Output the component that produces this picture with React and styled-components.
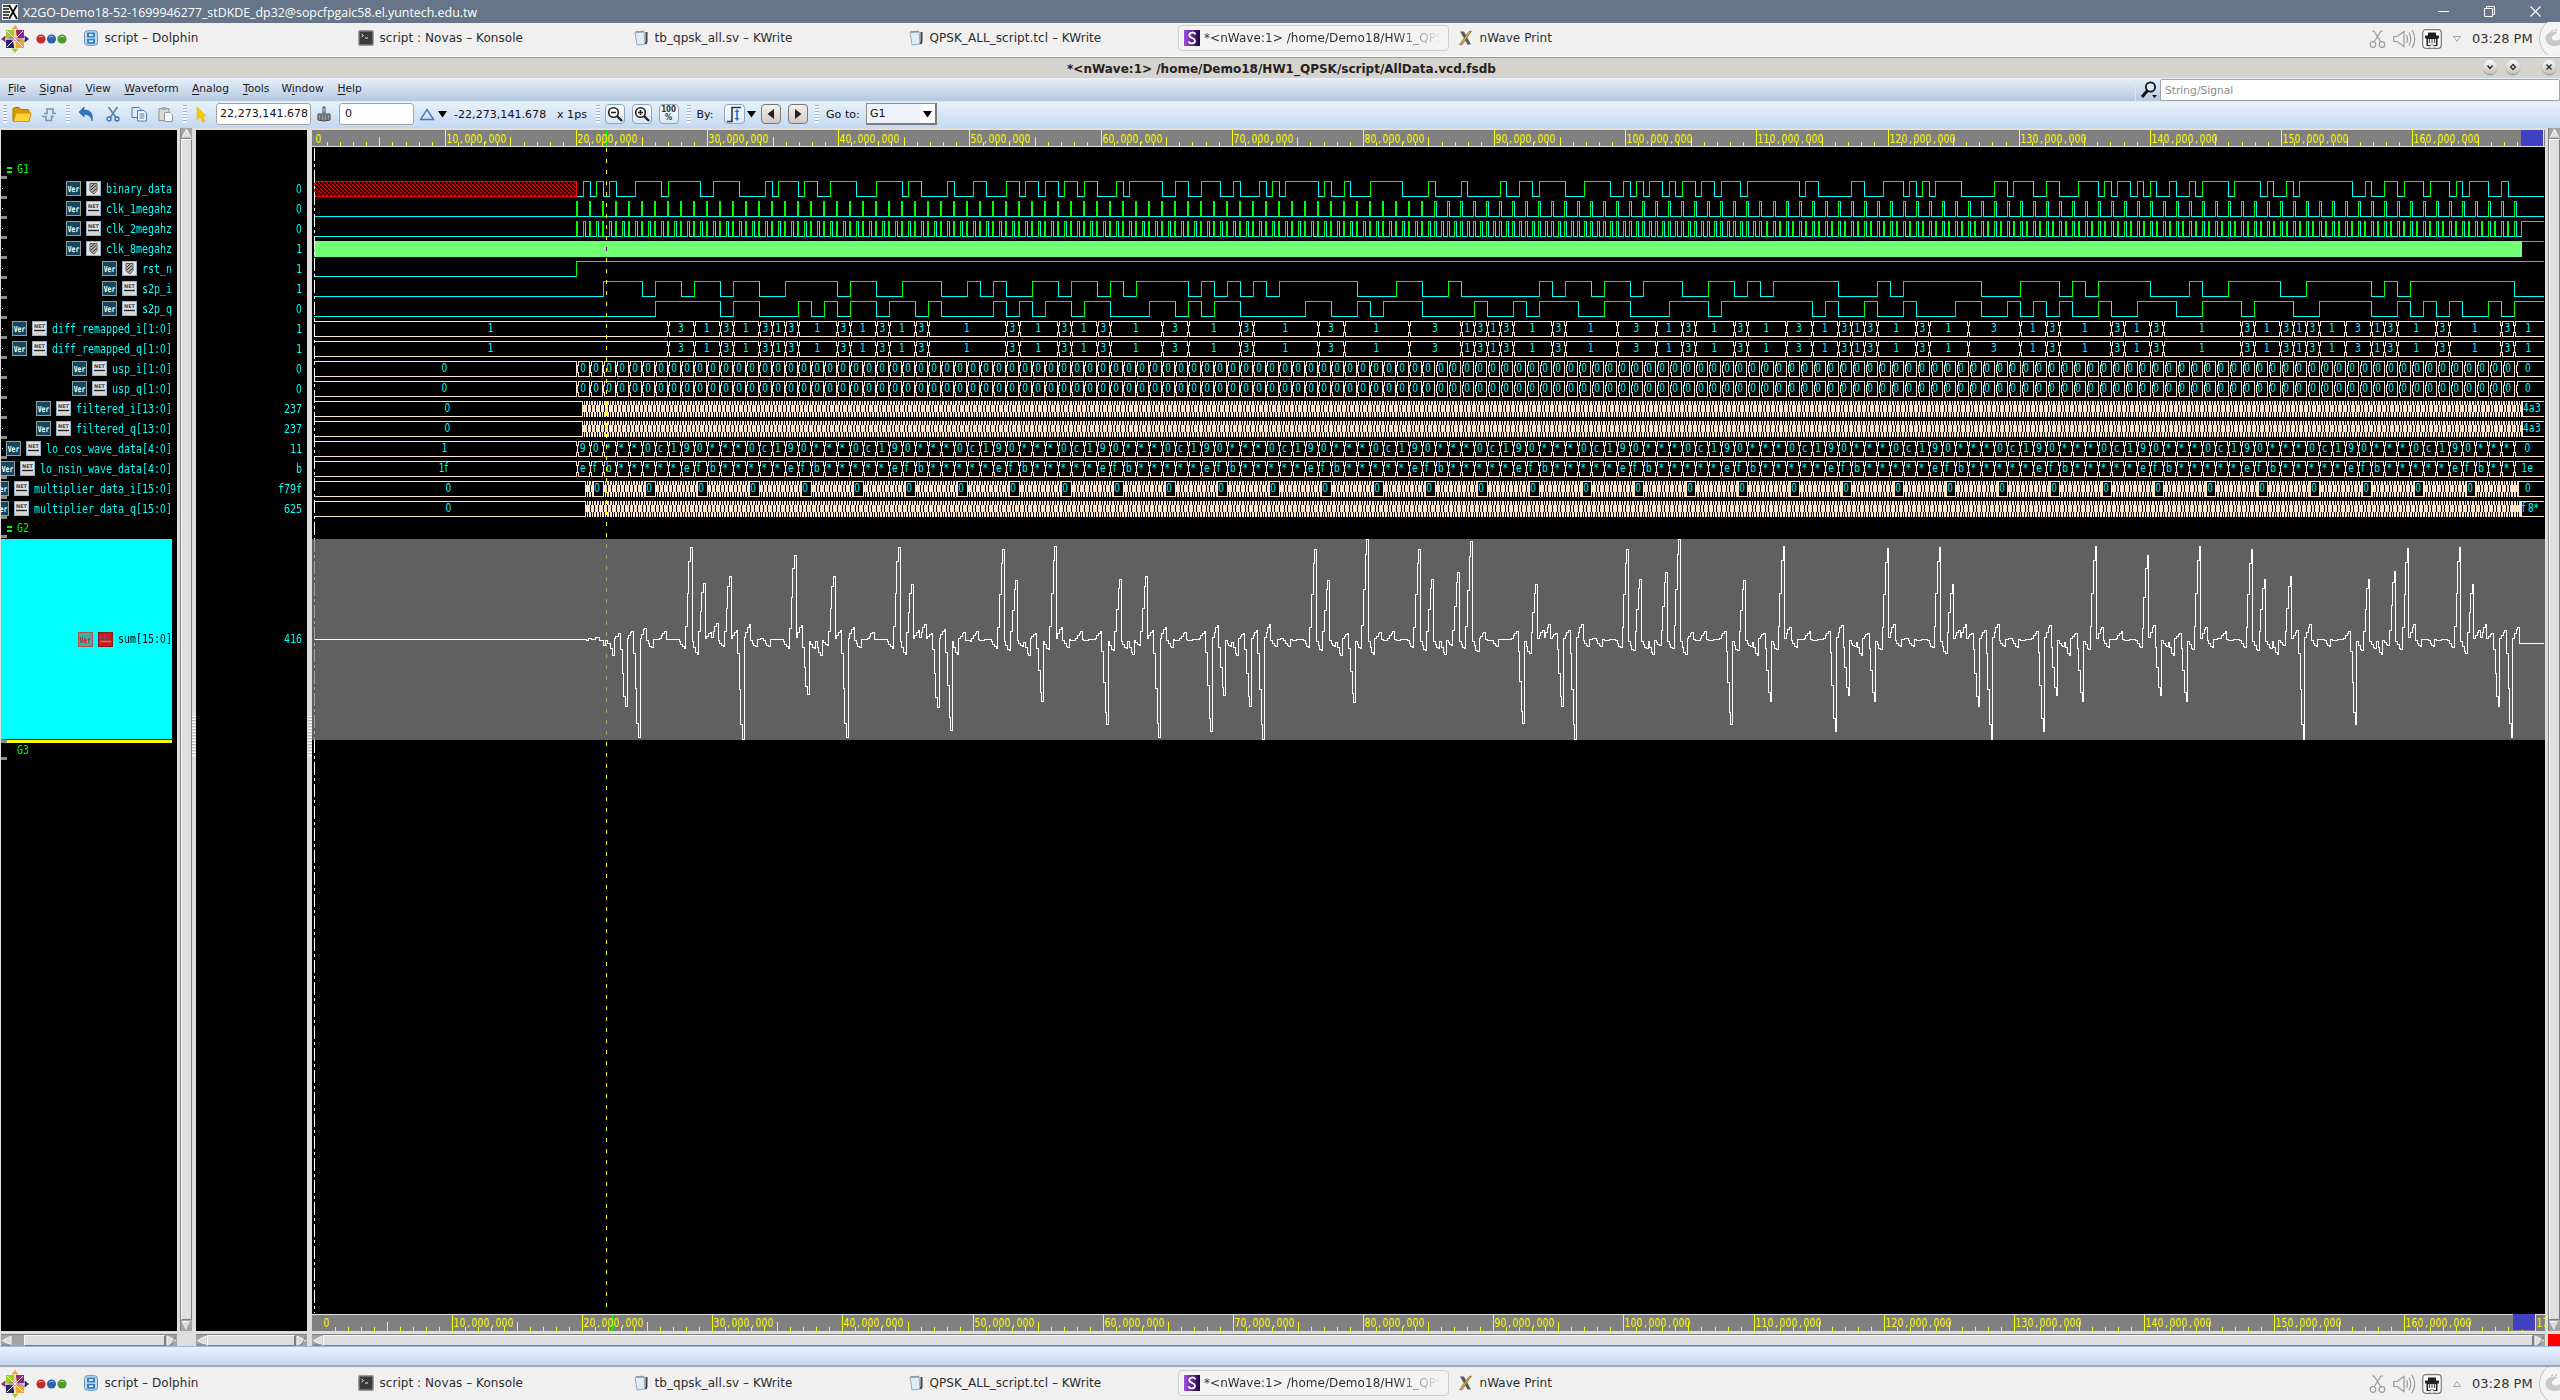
import React from "react";
import styled, { createGlobalStyle, css } from "styled-components";

const Global = createGlobalStyle`
  html, body { margin: 0; background: #000; }
  * { box-sizing: border-box; }
`;

const UI = `"DejaVu Sans", sans-serif`;
const MONO = `"DejaVu Sans Mono", monospace`;
const DIGIT = `"DejaVu Sans Condensed", "DejaVu Sans", sans-serif`;

const Page = styled.div`
  width: 2560px;
  height: 1400px;
  display: flex;
  flex-direction: column;
  overflow: hidden;
  background: #dedede;
  font-family: ${UI};
  color: #1c1c1c;
  white-space: nowrap;
`;

/* ---------- remote session title bar ---------- */
const SessionBar = styled.div`
  height: 23px;
  flex: none;
  background: #667688;
  color: #fff;
  display: flex;
  align-items: center;
  padding: 0 19px 0 2px;
  font: 12.4px "Open Sans", "Noto Sans", sans-serif;
`;
const SessionName = styled.span`
  margin-left: 5px;
  flex: 1;
  padding-top: 2px;
`;
const SessionButtons = styled.div`
  display: flex;
  gap: 35px;
  align-items: center;
`;

/* ---------- task bars ---------- */
const TaskBar = styled.div`
  height: ${(p) => (p.$bottom ? 33 : 35)}px;
  flex: none;
  background: #f0f0f0;
  display: flex;
  align-items: center;
  padding-bottom: ${(p) => (p.$bottom ? 0 : 3)}px;
  ${(p) => !p.$bottom && css`border-bottom: 1px solid #8f9c9c; box-shadow: inset 0 -1px 0 #fff;`}
`;
const Launchers = styled.div`
  width: 78px;
  display: flex;
  align-items: center;
  gap: 6px;
  flex: none;
`;
const Task = styled.div`
  width: 275px;
  height: 26px;
  flex: none;
  display: flex;
  align-items: center;
  padding-left: 5px;
  font-size: 12px;
  letter-spacing: 0.05px;
  color: #2c2c2c;
  margin-top: -1px;
`;
const TaskInner = styled.div`
  display: flex;
  align-items: center;
  gap: ${(p) => (p.$active ? 4 : 5.5)}px;
  overflow: hidden;
  ${(p) =>
    p.$active &&
    css`
      width: 271px;
      height: 26px;
      margin-left: -5px;
      padding-left: 5px;
      border: 1px solid #cfcfcf;
      border-radius: 4px;
      background: #f3f3f3;
      flex: none;
    `}
`;
const TaskText = styled.span`
  display: block;
  width: ${(p) => (p.$fade ? "242px" : "auto")};
  overflow: hidden;
  ${(p) => p.$fade && css`
    color: transparent;
    background: linear-gradient(90deg, #2c2c2c 78%, #f3f3f3 98%);
    background-clip: text;
    -webkit-background-clip: text;
  `}
`;
const Tray = styled.div`
  margin-left: auto;
  display: flex;
  align-items: center;
  height: 33px;
  flex: none;
`;
const Clock = styled.span`
  font-size: 13px;
  margin-left: 10px;
  width: 66px;
  color: #333;
`;

/* ---------- window chrome ---------- */
const WindowTitle = styled.div`
  height: 20px;
  flex: none;
  background: #d6d2ce;
  display: flex;
  align-items: center;
  font-weight: bold;
  font-size: 12px;
  color: #222;
`;
const TitleText = styled.span`
  flex: 1;
  text-align: center;
  padding-left: 80px;
  padding-top: 1px;
`;
const TitleButtons = styled.div`
  display: flex;
  align-items: center;
  padding-right: 4px;
  padding-bottom: 2px;
`;
const RoundButton = styled.span`
  width: 14px;
  height: 14px;
  border-radius: 50%;
  margin-left: ${(p) => p.$gap}px;
  background: linear-gradient(#fafafa, #c4c0bc);
  box-shadow: 0 1px 1px #8d8a86;
  display: flex;
  align-items: center;
  justify-content: center;
`;
const MenuBar = styled.div`
  height: 24px;
  flex: none;
  background: linear-gradient(#e8f1fc, #b5c8df);
  border-bottom: 1px solid #dfe9f5;
  display: flex;
  align-items: center;
  padding-left: 8px;
  font-size: 10.7px;
`;
const MenuItem = styled.span`
  width: ${(p) => p.$w}px;
  padding-bottom: 2px;
  u { text-underline-offset: 2px; }
`;
const Search = styled.div`
  margin-left: auto;
  display: flex;
  align-items: center;
  height: 22px;
  border-left: 1px solid #d7e3f2;
  padding-left: 4px;
`;
const SearchField = styled.div`
  margin-left: 2px;
  width: 400px;
  height: 22px;
  border: 1px solid #a0a4aa;
  border-radius: 2px;
  background: #fff;
  color: #8a8a8a;
  font-size: 10.7px;
  line-height: 22px;
  padding-left: 4px;
`;

const ToolBar = styled.div`
  height: 26px;
  flex: none;
  background: linear-gradient(#e7f2f8, #c4d8f2);
  display: flex;
  align-items: center;
  font-size: 11px;
  letter-spacing: 0.05px;
  color: #111;
  padding-bottom: 2px;
`;
const Slot = styled.span`
  flex: none;
  width: ${(p) => p.$w}px;
  margin-left: ${(p) => p.$gap || 0}px;
  display: flex;
  align-items: center;
  justify-content: center;
`;
const Label = styled(Slot)`
  justify-content: flex-start;
`;
const Grip = styled.span`
  flex: none;
  width: 4px;
  height: 18px;
  margin-left: ${(p) => p.$gap}px;
  background: repeating-linear-gradient(#9fb0c4 0 1px, #f4f8fc 1px 3px);
`;
const Field = styled.span`
  flex: none;
  width: ${(p) => p.$w}px;
  height: 22px;
  margin-left: ${(p) => p.$gap}px;
  border: 1px solid #a3a3a3;
  border-radius: 3px;
  background: #fff;
  line-height: 20px;
  padding-left: ${(p) => p.$pad}px;
`;
const PushButton = styled.span`
  flex: none;
  width: ${(p) => p.$w || 20}px;
  height: 20px;
  margin-left: ${(p) => p.$gap}px;
  border: 1px solid ${(p) => (p.$grey ? "#777" : "#8ba3bd")};
  border-radius: 4px;
  background: ${(p) => (p.$grey ? "linear-gradient(#f4f1ee,#cfcac5)" : "linear-gradient(#fbfdff,#dbe7f4)")};
  display: flex;
  align-items: center;
  justify-content: center;
`;
const Select = styled.span`
  flex: none;
  width: 71px;
  height: 22px;
  margin-left: 7px;
  border: 1px solid #8d8d8d;
  border-right: 2px solid #7a7a7a;
  border-bottom: 2px solid #7a7a7a;
  background: #edf2fb;
  display: flex;
  align-items: center;
  justify-content: space-between;
  padding-left: 3px;
`;
const SelectArrow = styled.span`
  width: 15px;
  height: 19px;
  background: #fff;
  display: flex;
  align-items: center;
  justify-content: center;
`;

/* ---------- workspace ---------- */
const Workspace = styled.div`
  height: 1218px;
  flex: none;
  display: flex;
  background: #dedede;
`;
const Column = styled.div`
  flex: none;
  width: ${(p) => p.$w}px;
  padding-top: 2px;
  padding-left: ${(p) => p.$pad || 0}px;
  display: flex;
  flex-direction: column;
`;
const Panel = styled.div`
  height: 1201px;
  flex: none;
  background: #000;
  padding-top: 27px;
  overflow: hidden;
`;
const Gutter = styled.div`
  flex: none;
  width: ${(p) => p.$w}px;
  padding-left: ${(p) => p.$pad || 0}px;
  display: flex;
  align-items: flex-start;
`;
const SplitGrip = styled.div`
  width: 4px;
  height: 40px;
  margin: 588px 0 0 ${(p) => p.$gap}px;
  background: repeating-linear-gradient(#fff 0 1px, #b9b9b9 1px 2px, #e4e4e4 2px 3px);
`;
const VScroll = styled.div`
  width: 12px;
  height: 1203px;
  background: #a4a4a4;
  border-left: 1px solid #808080;
  display: flex;
  flex-direction: column;
`;
const VThumb = styled.div`
  flex: 1;
  background: #dfdfdf;
  border: 1px solid #f8f8f8;
  border-right: 1px solid #7c7c7c;
  border-bottom: 1px solid #7c7c7c;
`;
const HScroll = styled.div`
  margin-top: 3px;
  height: 12px;
  background: #a4a4a4;
  border-top: 1px solid #808080;
  display: flex;
`;
const HThumb = styled.div`
  flex: 1;
  margin-left: ${(p) => p.$gap || 0}px;
  background: #dfdfdf;
  border: 1px solid #f8f8f8;
  border-right: 2px solid #7c7c7c;
  border-bottom: 1px solid #7c7c7c;
`;
const RedCorner = styled.div`
  width: 12px;
  height: 12px;
  margin-top: 3px;
  background: #f00;
`;
const ScrollStack = styled.div`
  display: flex;
  flex-direction: column;
`;

const GroupRow = styled.div`
  height: ${(p) => p.$h}px;
  display: flex;
  align-items: flex-end;
  position: relative;
  color: #0f0;
`;
const RowTick = styled.i`
  position: absolute;
  left: 0;
  bottom: 0;
  width: 6px;
  height: 3px;
  background: #8c8c8c;
`;
const RowDot = styled.i`
  position: absolute;
  left: 1px;
  top: 9px;
  width: 1px;
  height: 1px;
  background: #fff;
`;
const GroupMark = styled.i`
  width: 5px;
  height: 6px;
  margin: 0 5px 6px 6px;
  border: solid ${(p) => (p.$on ? "#0f0" : "transparent")};
  border-width: 2px 0;
`;
const Mono = styled.span`
  display: inline-block;
  font: 10px/12px ${MONO};
  letter-spacing: -0.02px;
  transform: scaleY(1.22);
  color: ${(p) => p.$c || "inherit"};
`;
const Zero = styled.span`
  font-family: ${DIGIT};
  letter-spacing: 0.28px;
`;
const GroupName = styled(Mono)`
  margin-bottom: 4px;
`;
const SignalRow = styled.div`
  height: 20px;
  display: flex;
  justify-content: flex-end;
  align-items: center;
  gap: 5px;
  padding-right: 5px;
  padding-bottom: 1px;
  color: #0ff;
  position: relative;
  > svg { flex: none; }
`;
const SelectedSignal = styled.div`
  width: 171px;
  height: 200px;
  margin-top: 1px;
  background: #0ff;
  display: flex;
  justify-content: flex-end;
  align-items: center;
  gap: 5px;
  color: #000;
  > svg { flex: none; }
`;
const InsertBar = styled.div`
  width: 171px;
  height: 4px;
  border-top: 1px solid #222;
  border-left: 6px solid #8c8c8c;
  background: #ff0;
`;
const ValueRow = styled.div`
  height: ${(p) => p.$h || 20}px;
  display: flex;
  justify-content: flex-end;
  align-items: center;
  padding-right: 5px;
  margin-top: ${(p) => p.$gap || 0}px;
  color: #0ff;
`;
const StatusBar = styled.div`
  height: 21px;
  flex: none;
  border-top: 1px solid #9db4e6;
  border-bottom: 2px solid #a3a6b0;
  background: linear-gradient(#e9f0fb, #c5d6f1);
`;

/* ---------- small drawings ---------- */
const Svg = ({ w, h, children }) => (
  <svg width={w} height={h} viewBox={`0 0 ${w} ${h}`} fill="none">
    {children}
  </svg>
);

const XLogo = () => (
  <Svg w={16} h={16}>
    <rect width="16" height="16" fill="#f4f4f4" />
    <path d="M1 2H8M1 5H7M1 8H8M1 11H7M1 14H6" stroke="#111" strokeWidth="1.3" />
    <path d="M7 1L15 15M15 1L7 15" stroke="#111" strokeWidth="1.8" />
  </Svg>
);

const CentLogo = () => (
  <Svg w={30} h={28}>
    <g>
      <path d="M15 0L18.5 4.5H11.5Z" fill="#e9a63a" />
      <path d="M15 28L18.5 23.5H11.5Z" fill="#9ccd2a" />
      <path d="M1 14L5.5 10.5V17.5Z" fill="#8f2b7a" />
      <path d="M29 14L24.5 10.5V17.5Z" fill="#26256b" />
      <rect x="6" y="5" width="8" height="8" fill="#9ccd2a" />
      <rect x="16" y="5" width="8" height="8" fill="#8f2b7a" />
      <rect x="6" y="15" width="8" height="8" fill="#26256b" />
      <rect x="16" y="15" width="8" height="8" fill="#e9a63a" />
      <path d="M15 3L18 14L15 25L12 14Z" fill="#e9a63a" />
      <path d="M3 14L15 12L27 14L15 16Z" fill="#8f2b7a" />
    </g>
    <path d="M7 6L23 22M23 6L7 22M15 4V24M5 14H25" stroke="#fff" strokeWidth="1" />
  </Svg>
);

const Dots = () => (
  <Svg w={31} h={12}>
    <circle cx="5" cy="6" r="4.6" fill="#c02a2a" />
    <circle cx="15.5" cy="6" r="4.6" fill="#2b63a8" />
    <circle cx="26" cy="6" r="4.6" fill="#4c9a2a" />
    <path d="M2.6 4.2a3 2 0 0 1 4.8 0M13.1 4.2a3 2 0 0 1 4.8 0M23.6 4.2a3 2 0 0 1 4.8 0" stroke="#fff" opacity=".6" />
  </Svg>
);

const taskIcons = {
  dolphin: (
    <Svg w={16} h={16}>
      <rect x="1.5" y=".7" width="13" height="14.6" rx="3" fill="#bcdcf5" stroke="#6b90b5" />
      <rect x="4" y="2.5" width="8" height="5" fill="#3c7fbf" />
      <rect x="4" y="8.8" width="8" height="5" fill="#3c7fbf" />
      <path d="M6 5h4M6 11.3h4" stroke="#fff" strokeWidth="1.4" />
    </Svg>
  ),
  konsole: (
    <Svg w={16} h={16}>
      <rect x=".8" y=".8" width="14.4" height="14.4" rx="1" fill="#3a3a3a" stroke="#9a9a9a" strokeWidth="1.4" />
      <path d="M3.5 4l2 1.5-2 1.5M7 8h3" stroke="#eee" />
    </Svg>
  ),
  kwrite: (
    <Svg w={16} h={16}>
      <path d="M2 2L11 1.5L12 14L4 15Z" fill="#dcecf8" stroke="#98a9b8" />
      <path d="M4 1v2M6 1v2M8 .8v2M10 .7v2" stroke="#777" />
      <path d="M13.5 2v10l-1 2" stroke="#444" strokeWidth="2" />
    </Svg>
  ),
  nwave: (
    <Svg w={16} h={16}>
      <defs>
        <linearGradient id="nw" x1="0" x2="1">
          <stop offset="0" stopColor="#a050e0" />
          <stop offset="1" stopColor="#1c0440" />
        </linearGradient>
      </defs>
      <rect width="16" height="16" fill="url(#nw)" />
      <path d="M11.5 4.5C10.5 1.5 5 2 5.3 5.3C5.6 8.4 11 7.6 11 10.7C11 14 5.5 14.3 4.5 11.4" stroke="#fff" strokeWidth="1.8" />
    </Svg>
  ),
  xprint: (
    <Svg w={16} h={16}>
      <path d="M2 1.5L6 1.5L13 14.5H9.5Z" fill="#5c5c5c" />
      <path d="M13.5 1L4 15L1.5 14.5L11 1.5Z" fill="#d6a548" stroke="#6d5a32" strokeWidth=".6" />
    </Svg>
  ),
};

const TrayIcons = ({ up }) => (
  <>
    <Svg w={17} h={20}>
      <g stroke="#9b9b9b" strokeWidth="1.2">
        <path d="M3 2L5 2L12 13M14 2L12 2L5 13" />
        <circle cx="4" cy="15.5" r="2.8" />
        <circle cx="13" cy="15.5" r="2.8" />
      </g>
    </Svg>
    <Slot $w={24} $gap={7}>
      <Svg w={24} h={24}>
        <g stroke="#9b9b9b" strokeWidth="1.2">
          <path d="M1 9.5Q0 12 1 14.5H4L11 19.5V4.5L4 9.5Z" />
          <path d="M13.5 8Q15.5 12 13.5 16M16 5.5Q19.5 12 16 18.5M19 3Q24.5 12 19 21" />
        </g>
      </Svg>
    </Slot>
    <Slot $w={20} $gap={5}>
      <Svg w={20} h={20}>
        <rect x=".7" y=".7" width="18.6" height="18.6" rx="3" fill="#fff" stroke="#777" strokeWidth="1.2" />
        <path d="M3 9.5V6.5H6V3.5H14V6.5H17V9.5L15.5 9.5V17H4.5V9.5Z" fill="#222" />
        <path d="M6 10V16H14V10Z" fill="#eee" />
        <path d="M7.5 10V14M10 10V14M12.5 10V14" stroke="#444" />
        <path d="M8 16h4v3.3H8Z" fill="#fff" stroke="#777" strokeWidth=".8" />
      </Svg>
    </Slot>
    <Slot $w={10} $gap={10}>
      <Svg w={10} h={8}>
        <path d={up ? "M5 1.5L8.5 6.5H1.5Z" : "M1.5 1.5H8.5L5 6.5Z"} stroke="#a4a4a4" />
      </Svg>
    </Slot>
  </>
);

const Cashew = () => (
  <Svg w={22} h={33}>
    <circle cx="22" cy="16.5" r="20.5" fill="#f4f4f4" stroke="#c4c4c4" />
    <path d="M19 10C11 8 6 14 8 19C10 24 17 25 22 23V17C18 20 13 18 14 15C15 12 18 13 19 10Z" fill="#c9c9c9" />
    <path d="M13 9l2-1M17 8l2 0" stroke="#aaa" />
  </Svg>
);

const Arrow = ({ dir }) => {
  const d = { up: "M5.5 1L10 9.5H1Z", down: "M1 1.5H10L5.5 10Z", left: "M1.5 5.5L10 1V10Z", right: "M9.5 5.5L1 1V10Z" }[dir];
  return (
    <Svg w={11} h={11}>
      <path d={d} fill="#dcdcdc" stroke="#f4f4f4" strokeWidth="1" />
      <path d={dir === "up" || dir === "left" ? "M10 10H1" : "M10 1L5.5 10"} stroke="#6d6d6d" strokeWidth=".8" />
    </Svg>
  );
};

const VerIcon = ({ inv }) => (
  <Svg w={15} h={15}>
    <rect width="15" height="15" fill={inv ? "#b05050" : "#8ea0a2"} />
    <rect x="1" y="1" width="13" height="13" fill={inv ? "#35b0a8" : "#17465a"} />
    <text transform="translate(1.7 10.7) scale(1 1.3)" fontFamily="DejaVu Sans Mono" fontWeight="bold" fontSize="6.4" fill={inv ? "#d01818" : "#fff"}>
      Ver
    </text>
  </Svg>
);
const NetIcon = ({ inv }) => (
  <Svg w={15} h={15}>
    <rect width="15" height="15" fill={inv ? "#802020" : "#8fb0cf"} />
    <rect x="1" y="1" width="13" height="13" fill={inv ? "#e01010" : "#dfe3ea"} />
    <text x="2" y="7.2" fontFamily="DejaVu Sans" fontWeight="bold" fontSize="5" fill={inv ? "#3c6a6a" : "#3c4650"}>
      NET
    </text>
    <path d="M2 9.5H13" stroke={inv ? "#30b0b0" : "#222"} strokeWidth="1.4" />
    {!inv && <path d="M1 12.5H14" stroke="#d8cfc8" strokeWidth="2" />}
  </Svg>
);
const RegIcon = () => (
  <Svg w={15} h={15}>
    <rect width="15" height="15" fill="#8fb0cf" />
    <rect x="1" y="1" width="13" height="13" fill="#e4e4e4" />
    <path d="M4 2.5H11V9.5L8 13L4 10Z" fill="#bdb6ae" stroke="#555" />
    <path d="M5 6L8.5 3M5 9L10 4.5M6.5 11L10.5 7.5" stroke="#222" />
  </Svg>
);

/* ---------- signals ---------- */
const X0 = 314;
const PERIOD = 13.006;
const END = 2543.5;
const CYAN = "#00ffff";
const GREEN = "#00ff00";
const BUS = "#ffe4cc";

const binaryEdges = [
  1, 2, 3, 4, 5, 6, 9, 13, 14, 19, 21, 25, 29, 30, 31, 34, 35, 37, 39, 43, 46, 50, 51, 53, 57, 58, 61, 63, 66, 68, 69, 71, 72, 74,
  75, 77, 78, 80, 83, 84, 85, 90, 92, 94, 96, 99, 101, 102, 105, 106, 107, 108, 109, 114, 115, 116, 118, 119, 122, 127, 131, 132,
  136, 137, 142, 143, 145, 147, 148, 152, 155, 159, 161, 162, 163, 164, 165, 167, 168, 169, 170, 172, 173, 175, 176, 179, 180,
  188, 189, 191, 196, 198, 201, 204, 205, 206, 207, 208, 209, 213, 218, 220, 221, 224, 226, 228, 231, 234, 235, 236, 237, 239,
  240, 241, 242, 243, 245, 246, 248, 249, 250, 254, 255, 259, 260, 261, 263, 264, 265, 273, 275, 276, 278, 280, 281, 284, 285,
  288, 289, 290, 291, 294, 296, 297,
];
const s2pI = [
  2, 5, 6, 8, 9, 11, 12, 14, 16, 20, 21, 23, 25, 28, 30, 31, 32, 33, 35, 37, 38, 40, 41, 42, 43, 47, 48, 49, 50, 51, 52, 53, 54,
  60, 63, 65, 67, 68, 74, 75, 76, 78, 79, 81, 82, 85, 87, 89, 90, 91, 92, 97, 100, 101, 102, 108, 111, 114, 115, 116, 117, 121,
  124, 125, 127, 131, 133, 138, 139, 140, 141, 149,
];
const s2pQ = [
  6, 11, 12, 14, 17, 18, 19, 20, 21, 23, 24, 26, 27, 28, 32, 33, 34, 35, 36, 38, 39, 41, 44, 46, 47, 48, 49, 51, 56, 58, 60, 61,
  62, 65, 69, 70, 72, 73, 74, 77, 79, 81, 84, 87, 88, 95, 96, 97, 99, 100, 102, 103, 106, 108, 110, 111, 112, 113, 114, 115,
  117, 118, 120, 123, 125, 128, 129, 132, 134, 138, 140, 141, 142, 143, 144, 145, 147, 148, 149,
];
const diffEdges = [
  7, 9, 11, 12, 14, 15, 16, 17, 20, 21, 23, 24, 26, 27, 33, 34, 37, 38, 40, 41, 45, 47, 51, 52, 57, 59, 64, 68, 69, 70, 71, 72,
  75, 76, 80, 83, 85, 86, 89, 90, 93, 95, 97, 98, 99, 100, 103, 104, 107, 111, 113, 114, 118, 119, 121, 122, 128, 129, 131,
  132, 133, 134, 136, 138, 139, 140, 143, 144, 148, 149,
];
const sumPeaks = [
  529, 302, 622, 293, 352, 326, 304, 328, 328, 353, 52, 371, 160, 307, 280, 347, 139, 301, 628, 283, 349, 325, 349, 328, 328,
  353, 76, 286, 493, 355, 374, 346, 139, 301, 622, 292, 352, 328, 307, 328, 328, 353, 52, 371, 163, 301, 283, 310, 532, 298,
  601, 373, 307, 332, 304, 330, 328, 353, 58, 361, 151, 349, 376, 310, 514, 358, 49, 292, 350, 331, 304, 330, 328, 304, 583,
  361, 148, 355, 373, 346, 139, 301, 622, 292, 350, 331, 305, 329, 328, 304, 604, 286, 496, 349, 376, 310, 529, 301, 628, 283,
  349, 325, 349, 329, 328, 352, 58, 361, 151, 349, 376, 310, 517, 355, 27, 373, 307, 331, 304, 329, 328, 352, 58, 361, 148,
  355, 373, 346, 127, 355, 34, 364, 305, 331, 349, 328, 328, 304, 580, 370, 163, 301, 283, 310, 529, 301, 628, 283, 349, 325,
  349, 329, 328, 352, 58, 361, 148, 355, 373, 346, 127, 355, 27, 373, 307, 331, 304, 330, 328, 304, 583, 361, 151, 349, 376,
  310, 514, 358, 49, 292, 352, 328, 304, 330, 328, 304, 604, 286, 496, 349, 376, 310, 514, 358, 55, 283, 349, 325, 349, 329,
  328, 352, 52, 370, 163, 301, 283, 310, 529, 301, 628, 283, 349, 325, 352, 329, 328, 304, 604, 286, 496, 349, 376, 310, 514,
  358, 49, 292, 352, 328, 304, 330, 328, 352, 76, 286, 496, 349, 376, 310, 514, 358, 49, 292, 352, 325, 304, 330, 328, 352, 58,
  361, 148, 355, 373, 346, 139, 301, 628, 283, 349, 328, 349, 329, 328, 304, 583, 361, 148, 355, 373, 346, 124, 358, 55, 283,
  349, 326, 349, 329, 328, 352, 52, 370, 163, 301, 283, 310, 529, 301, 622, 292,
];

/* Data settles just after the clock edge, so it has its own origin. */
const at = (k) => Math.floor(577.1 + 13.003 * k) + 0.5;
const wholePulse = (k) => {
  const x = Math.floor(576.2 + 13.0087 * k) + 0.5;
  return [x, x + (k < 66 ? 1 : 2)];
};
const halfPulse = (k) => {
  const x = Math.floor(576.53 + 13.006 * k) + 0.5;
  return [x, x + (k < 91 ? 2 : 1)];
};
const symbols = Array.from({ length: 150 }, (_, k) => k);
const clock1 = symbols.flatMap(wholePulse);
const clock2 = symbols.flatMap((k) => (k < 149 ? [...wholePulse(k), ...halfPulse(k + 0.5)] : wholePulse(k)));

/* Splits a two-level trace into its high parts (with rising edges) and low parts (with falling edges). */
function levelPaths(edges, top, from) {
  const hi = top + 0.5;
  const lo = top + 15.5;
  let high = "";
  let low = "";
  let x = from;
  let up = false;
  edges.forEach((e) => {
    if (up) {
      high += `M${x} ${hi}H${e}`;
      low += `M${e} ${hi}V${lo + 0.5}`;
    } else {
      low += `M${x} ${lo}H${e}`;
      high += `M${e} ${lo}V${hi - 0.5}`;
    }
    x = e;
    up = !up;
  });
  if (up) high += `M${x} ${hi}H${END}`;
  else low += `M${x} ${lo}H${END}`;
  return [low, high];
}

const Level = ({ edges, top, from = X0 }) => {
  const [low, high] = levelPaths(edges, top, from);
  return (
    <g shapeRendering="crispEdges">
      <path d={low} stroke={CYAN} />
      <path d={high} stroke={GREEN} />
    </g>
  );
};

const ClockTrace = ({ edges, top, last }) => {
  /* The narrowest pulses are drawn solid. */
  let solid = "";
  for (let i = 0; i + 1 < edges.length; i += 2) {
    if (edges[i + 1] - edges[i] <= 1) solid += `M${edges[i + 1]} ${top + 15}V${top}`;
  }
  return (
    <g>
      <Level edges={last ? [...edges, last] : edges} top={top} />
      <path d={solid} stroke={GREEN} shapeRendering="crispEdges" />
    </g>
  );
};

const CellText = ({ items, y }) => {
  const xs = [];
  let str = "";
  items.forEach(([cx, t]) => {
    t.split("").forEach((ch, i) => {
      xs.push((cx - t.length * 3 + i * 6).toFixed(1));
      str += ch;
    });
  });
  return (
    <text x={xs.join(" ")} transform={`translate(0 ${y}) scale(1 1.22)`} fontFamily={DIGIT} fontSize="10" fill={CYAN}>
      {str}
    </text>
  );
};

function busPath(bounds, top, from, to) {
  const xs = [from, ...bounds, to];
  let d = "";
  for (let i = 0; i < xs.length - 1; i++) {
    const a = i ? xs[i] + 1 : xs[i];
    const b = i < xs.length - 2 ? xs[i + 1] - 1 : xs[i + 1];
    if (b > a) d += `M${a - 0.5} ${top + 0.5}H${b + 0.5}M${a - 0.5} ${top + 15.5}H${b + 0.5}`;
  }
  bounds.forEach((x) => {
    d += `M${x - 1} ${top}V${top + 5}M${x + 1} ${top}V${top + 5}M${x} ${top + 4}V${top + 12}`;
    d += `M${x - 1} ${top + 11}V${top + 16}M${x + 1} ${top + 11}V${top + 16}`;
  });
  return d;
}

const Bus = ({ bounds, top, from = X0, to = END, texts }) => (
  <g>
    <path d={busPath(bounds, top, from + 0.5, to)} stroke={BUS} shapeRendering="crispEdges" />
    <CellText items={texts} y={top + 11} />
  </g>
);

/* A bus that leaves its idle value for a moment at each clock pulse. */
const PulsedBus = ({ bounds, top, texts }) => {
  let d = "";
  let x = X0 + 0.5;
  for (let i = 0; i < bounds.length; i += 2) {
    const [r, f] = [bounds[i], bounds[i + 1]];
    d += `M${x - 0.5} ${top + 0.5}H${r}M${x - 0.5} ${top + 15.5}H${r}`;
    d += `M${r} ${top}V${top + 16}M${f} ${top + 4}V${top + 12}`;
    d += `M${f + 1} ${top}V${top + 5}M${f + 1} ${top + 11}V${top + 16}`;
    x = f + 1;
  }
  d += `M${x - 0.5} ${top + 0.5}H${END}M${x - 0.5} ${top + 15.5}H${END}`;
  return (
    <g>
      <path d={d} stroke={BUS} shapeRendering="crispEdges" />
      <CellText items={texts} y={top + 11} />
    </g>
  );
};

/* Value changes too close to separate: a solid core with combed rims. */
const Dense = ({ from, to, top }) => {
  let comb = "";
  let core = "";
  for (let x = from + 1; x < to; x += PERIOD / 5) {
    const p = Math.floor(x) + 0.5;
    comb += `M${p} ${top}V${top + 4}M${p} ${top + 11}V${top + 16}`;
  }
  for (let x = from + 5; x < to - 9; x += PERIOD) {
    [0, 4.9, 8.1].forEach((o) => {
      core += `M${Math.floor(x + o) + 0.5} ${top + 4}V${top + 11}`;
    });
  }
  return (
    <g shapeRendering="crispEdges">
      <rect x={from} y={top} width={to - from} height="16" fill={BUS} />
      <path d={comb + core} stroke="#000" />
    </g>
  );
};

const Wide = ({ top, to }) => (
  <path d={`M${X0 + 0.5} ${top + 0.5}H${to}M${X0 + 0.5} ${top + 15.5}H${to}`} stroke={BUS} shapeRendering="crispEdges" />
);
const Tail = ({ top, from }) => (
  <path d={`M${from} ${top + 0.5}H${END}M${from} ${top + 15.5}H${END}M${from + 0.5} ${top}V${top + 16}`} stroke={BUS} shapeRendering="crispEdges" />
);

function sumPath() {
  const y = (s) => Math.min(739.5, Math.max(539.5, Math.round(530 + s / 3) + 0.5));
  let d = `M${X0} ${y(328)}H586.5`;
  [[588, 331], [591, 325], [595, 328], [599, 322], [603, 331], [605, 346], [607, 331], [610, 340], [612, 355], [613.5, 376], [615, 325], [618, 319], [619.5, 310]].forEach(
    ([x, s]) => {
      d += `V${y(s)}H${Math.round(x) + 0.5}`;
    }
  );
  sumPeaks.forEach((s, j) => {
    const cx = 626.3 + (PERIOD / 2) * j;
    [0.14, 0.5, 0.85, 1].forEach((f, i) => {
      d += `V${y(328 + (s - 328) * f)}H${Math.floor(cx - 4.07 + (PERIOD / 8) * i) + 0.5}`;
    });
  });
  return d + `V${y(340)}H${END}`;
}

const Ruler = ({ x0, step, y, base, cursor, zeroX }) => {
  let d = "";
  const labels = [];
  for (let i = 0; i <= 170; i++) {
    const x = Math.floor(x0 + (step / 10) * i) + 0.5;
    if (x > 2545) break;
    const major = i % 10 === 0;
    const from = major ? 0 : i % 5 === 0 ? 7 : 12;
    if (i > 0) d += `M${x} ${y + from}V${y + 16}`;
    if (major && i > 0) labels.push([x + 1, `${i},000,000`]);
  }
  return (
    <g shapeRendering="crispEdges">
      <rect x="312" y={y} width="2233" height="16" fill="#808080" />
      <path d={d} stroke="#ff0" />
      <path d={`M${cursor} ${y}V${y + 16}`} stroke={GREEN} />
      {[[zeroX, "0"], ...labels].map(([x, t]) => (
        <text
          key={t}
          x={t.split("").map((c, i) => x + i * 6 + (c === "," ? 1.5 : 0)).join(" ")}
          transform={`translate(0 ${base}) scale(1 1.22)`}
          fontFamily={DIGIT}
          fontSize="10"
          fill="#ff0"
        >
          {t}
        </text>
      ))}
    </g>
  );
};

const Cursor = ({ from, to, color }) => {
  let d = "";
  for (let y = 148; y < 1314; y += 11) if (y >= from && y < to) d += `M606.5 ${y}V${y + 4}`;
  return <path d={d} stroke={color} shapeRendering="crispEdges" />;
};

const rowTop = (i) => 181 + 20 * i;

const Waves = () => {
  const diff = diffEdges.map(at);
  const starts = [X0, ...diff];
  const ends = [...diff, END];
  const diffItems = starts.map((x, i) => [(x + ends[i]) / 2 - 0.5, i % 2 ? "3" : "1"]);
  const uspItems = [[444.5, "0"], ...symbols.slice(0, 149).map((k) => [at(k + 0.5) - 0.3, "0"]), [2528, "0"]];
  const cells = symbols.map(at);
  const seq = (first, pat, last) => [
    [444.8, first],
    ...symbols.slice(0, 149).map((k) => [577 + 13.003 * (k + 0.5) - 0.6, pat[k % 8]]),
    [2527.5, last],
  ];
  const gaps = Array.from({ length: 37 }, (_, n) => [
    Math.round(576.8 + PERIOD * (1.25 + 4 * n)),
    Math.round(576.6 + PERIOD * (2 + 4 * n)),
  ]);
  return (
    <svg width="2233" height="1201" viewBox="312 130 2233 1201" fill="none">
      <defs>
        <pattern id="unknown" width="4" height="4" patternUnits="userSpaceOnUse">
          <path d="M0 0h1v1h-1zM1 1h1v1h-1zM2 2h1v1h-1zM3 3h1v1h-1z" fill="#f00" shapeRendering="crispEdges" />
        </pattern>
      </defs>
      <rect x="312" y="130" width="2233" height="1201" fill="#000" />
      <Ruler x0={314.2} step={131.15} y={130} base={142.6} cursor={606.5} zeroX={315.5} />
      <rect x="2521" y="130" width="22" height="16" fill="#4040c0" />
      <rect x="312" y="146" width="2233" height="1" fill="#dedede" />

      <rect x={X0 + 0.5} y="181.5" width="262" height="15" fill="url(#unknown)" stroke="#f00" shapeRendering="crispEdges" />
      <Level edges={binaryEdges.map((h) => at(h / 2))} top={rowTop(0)} from={577} />
      <ClockTrace edges={clock1} top={rowTop(1)} />
      <ClockTrace edges={clock2} top={rowTop(2)} last={2521.5} />
      <rect x={X0} y="241" width="2208" height="16" fill="#73ff73" />
      <path d={`M2522 241.5H${END}`} stroke={GREEN} shapeRendering="crispEdges" />
      <Level edges={[576.5]} top={rowTop(4)} />
      <Level edges={s2pI.map(at)} top={rowTop(5)} />
      <Level edges={s2pQ.map(at)} top={rowTop(6)} />
      <Bus bounds={diff} top={rowTop(7)} texts={diffItems} />
      <Bus bounds={diff} top={rowTop(8)} texts={diffItems} />
      <PulsedBus bounds={clock1} top={rowTop(9)} texts={uspItems} />
      <PulsedBus bounds={clock1} top={rowTop(10)} texts={uspItems} />
      {[11, 12].map((r) => (
        <g key={r}>
          <Wide top={rowTop(r)} to={582} />
          <Dense from={582} to={2522} top={rowTop(r)} />
          <Tail from={2522} top={rowTop(r)} />
          <CellText items={[[447.5, "0"], [2532, "4a3"]]} y={rowTop(r) + 11} />
        </g>
      ))}
      <Bus bounds={cells} top={rowTop(13)} texts={seq("1", "90***0c1", "0")} />
      <Bus bounds={cells} top={rowTop(14)} texts={seq("1f", "efb*****", "1e")} />
      <Wide top={rowTop(15)} to={585} />
      <Dense from={585} to={2518} top={rowTop(15)} />
      {gaps.map(([a, b]) => (
        <rect key={a} x={a + 0.5} y={rowTop(15) + 0.5} width={b - a} height="15" fill="#000" stroke={BUS} shapeRendering="crispEdges" />
      ))}
      <Tail from={2518} top={rowTop(15)} />
      <CellText items={[[448.5, "0"], ...gaps.map(([a]) => [a + 4.2, "0"]), [2528, "0"]]} y={rowTop(15) + 11} />
      <Wide top={rowTop(16)} to={585} />
      <Dense from={585} to={2521} top={rowTop(16)} />
      <Tail from={2521} top={rowTop(16)} />
      <CellText items={[[448.5, "0"], [2531, "f8*"]]} y={rowTop(16) + 11} />

      <rect x="312" y="539" width="2233" height="201" fill="#606060" />
      <path d={sumPath()} stroke="#fff" shapeRendering="crispEdges" />

      <path d="M314.5 148V539M314.5 740V1313" stroke="#fff" strokeDasharray="13 3 3 3" shapeRendering="crispEdges" />
      <path d="M314.5 539V740" stroke="#a0a0a0" strokeDasharray="13 3 3 3" shapeRendering="crispEdges" />
      <Cursor from={148} to={241} color="#ff0" />
      <Cursor from={241} to={257} color="#800080" />
      <Cursor from={257} to={538} color="#ff0" />
      <Cursor from={538} to={738} color="#a0a060" />
      <Cursor from={738} to={1314} color="#ff0" />

      <rect x="312" y="1314" width="2233" height="1" fill="#dedede" />
      <Ruler x0={322.3} step={130.16} y={1315} base={1327.3} cursor={612.5} zeroX={323.5} />
      <rect x="2513" y="1314" width="22" height="16" fill="#4040c0" />
    </svg>
  );
};

/* ---------- lists ---------- */
const signals = [
  ["binary_data", "reg", "0"],
  ["clk_1megahz", "net", "0"],
  ["clk_2megahz", "net", "0"],
  ["clk_8megahz", "reg", "1"],
  ["rst_n", "reg", "1"],
  ["s2p_i", "net", "1"],
  ["s2p_q", "net", "0"],
  ["diff_remapped_i[1:0]", "net", "1"],
  ["diff_remapped_q[1:0]", "net", "1"],
  ["usp_i[1:0]", "net", "0"],
  ["usp_q[1:0]", "net", "0"],
  ["filtered_i[13:0]", "net", "237"],
  ["filtered_q[13:0]", "net", "237"],
  ["lo_cos_wave_data[4:0]", "net", "11"],
  ["lo_nsin_wave_data[4:0]", "net", "b"],
  ["multiplier_data_i[15:0]", "net", "f79f"],
  ["multiplier_data_q[15:0]", "net", "625"],
];

const Name = ({ children }) => (
  <Mono>{children.split(/(0)/).map((s, i) => (s === "0" ? <Zero key={i}>0</Zero> : s))}</Mono>
);

const tasks = [
  ["dolphin", "script – Dolphin"],
  ["konsole", "script : Novas – Konsole"],
  ["kwrite", "tb_qpsk_all.sv – KWrite"],
  ["kwrite", "QPSK_ALL_script.tcl – KWrite"],
  ["nwave", "*<nWave:1> /home/Demo18/HW1_QPS"],
  ["xprint", "nWave Print"],
];

const Taskbar = ({ bottom }) => (
  <TaskBar $bottom={bottom}>
    <Launchers>
      <CentLogo />
      <Dots />
    </Launchers>
    {tasks.map(([icon, text]) => (
      <Task key={text}>
        <TaskInner $active={icon === "nwave"}>
          {taskIcons[icon]}
          <TaskText $fade={icon === "nwave"}>{text}</TaskText>
        </TaskInner>
      </Task>
    ))}
    <Tray>
      <TrayIcons up={bottom} />
      <Clock>03:28 PM</Clock>
      <Cashew />
    </Tray>
  </TaskBar>
);

const menus = [
  ["", "F", "ile", 31.5],
  ["", "S", "ignal", 46],
  ["", "V", "iew", 39],
  ["", "W", "aveform", 67.5],
  ["", "A", "nalog", 51],
  ["", "T", "ools", 38.5],
  ["W", "i", "ndow", 56],
  ["", "H", "elp", 40],
];

const Down = () => (
  <Svg w={10} h={8}>
    <path d="M0 1H9L4.5 7.5Z" fill="#000" />
  </Svg>
);

const Magnifier = ({ plus }) => (
  <Svg w={16} h={16}>
    <circle cx="6.5" cy="6.5" r="4.8" stroke="#222" strokeWidth="1.6" fill="#fff" />
    <path d="M10 10l5 5" stroke="#222" strokeWidth="2.4" />
    <path d={plus ? "M4 6.5h5M6.5 4v5" : "M4 6.5h5"} stroke="#222" strokeWidth="1.6" />
  </Svg>
);

const Hundred = styled.span`
  font: bold 8px/8px ${DIGIT};
  letter-spacing: -0.2px;
  text-align: center;
  color: #333;
  display: flex;
  flex-direction: column;
`;

const Tools = () => (
  <ToolBar>
    <Grip $gap={3} />
    <Slot $w={20} $gap={5}>
      <Svg w={20} h={17}>
        <path d="M1 3Q1 1.5 2.5 1.5H7L9 3.5H16Q17 3.5 17 5V15H1Z" fill="#d99a00" stroke="#a97a00" />
        <path d="M1.5 15.5L4 7H19L17 15.5Z" fill="#ffd23a" stroke="#c99a10" />
      </Svg>
    </Slot>
    <Slot $w={16} $gap={9}>
      <Svg w={16} h={15}>
        <path d="M1 9.5H5V13.5H10.5V9.5H13M3 6.5H6V2H12V6.5H15" stroke="#7a93b5" strokeWidth="1.6" />
      </Svg>
    </Slot>
    <Grip $gap={9} />
    <Slot $w={17} $gap={8}>
      <Svg w={17} h={16}>
        <path d="M1 6L6 1V4C12 4 15.5 7 14 15C13 10 10.5 8.5 6 8.5V11Z" fill="#2f78c8" stroke="#1c5aa0" strokeWidth=".6" />
      </Svg>
    </Slot>
    <Slot $w={14} $gap={11}>
      <Svg w={14} h={16}>
        <path d="M2.5 1L9.5 11M11.5 1L4.5 11" stroke="#5f7fa6" strokeWidth="1.5" />
        <circle cx="3" cy="13" r="2" stroke="#3b6fae" strokeWidth="1.3" />
        <circle cx="11" cy="13" r="2" stroke="#3b6fae" strokeWidth="1.3" />
      </Svg>
    </Slot>
    <Slot $w={17} $gap={11}>
      <Svg w={17} h={16}>
        <path d="M1 1.5H8L10 3.5V11.5H1Z" fill="#dfeaf7" stroke="#4c7ab0" />
        <path d="M6.5 4.5H13L15.5 7V15H6.5Z" fill="#f4f9ff" stroke="#4c7ab0" />
        <path d="M8.5 8h5M8.5 10h5M8.5 12h5" stroke="#4c7ab0" />
      </Svg>
    </Slot>
    <Slot $w={16} $gap={10}>
      <Svg w={16} h={16}>
        <path d="M1 2.5H11V14.5H1Z" fill="#d8d8d8" stroke="#909090" />
        <path d="M4 1H8V4H4Z" fill="#aaa" />
        <path d="M6.5 6.5H12L14.5 9V15.5H6.5Z" fill="#f6f6f6" stroke="#999" />
      </Svg>
    </Slot>
    <Grip $gap={9} />
    <Slot $w={11} $gap={9}>
      <Svg w={11} h={17}>
        <path d="M1 1L10 10H6.5L9 15L6.5 16L4.5 11L1 14Z" fill="#ffc800" stroke="#e6ae00" strokeWidth=".6" />
      </Svg>
    </Slot>
    <Field $w={95} $gap={9} $pad={3}>22,273,141.678</Field>
    <Slot $w={16} $gap={5}>
      <Svg w={16} h={16}>
        <path d="M7 1H9V7H7Z" fill="#fff" stroke="#444" />
        <path d="M2 8H14V14Q8 16 2 14Z" fill="#9a9fa5" stroke="#444" />
        <path d="M5 9v5M8 9v5M11 9v5" stroke="#444" />
      </Svg>
    </Slot>
    <Field $w={75} $gap={7} $pad={5}>0</Field>
    <Slot $w={16} $gap={5}>
      <Svg w={16} h={13}>
        <path d="M8 1.5L14.5 11.5H1.5Z" stroke="#4a76b8" strokeWidth="1.4" />
      </Svg>
    </Slot>
    <Slot $w={10} $gap={3}><Down /></Slot>
    <Label $w={96} $gap={6}>-22,273,141.678</Label>
    <Label $w={32} $gap={7}>x 1ps</Label>
    <Grip $gap={6.5} />
    <PushButton $gap={5}><Magnifier /></PushButton>
    <PushButton $gap={7}><Magnifier plus /></PushButton>
    <PushButton $gap={7}>
      <Hundred><span>100</span><span>%</span></Hundred>
    </PushButton>
    <Grip $gap={8} />
    <Label $w={22} $gap={6}>By:</Label>
    <PushButton $w={21} $gap={5}>
      <Svg w={16} h={17}>
        <path d="M1 15.5H6V1.5H15" stroke="#333" strokeWidth="1.6" />
        <path d="M11 3L8.5 6H13.5ZM11 15L8.5 12H13.5Z" fill="#2b6fd0" />
        <path d="M11 5v8" stroke="#2b6fd0" strokeWidth="1.6" />
      </Svg>
    </PushButton>
    <Slot $w={10} $gap={2}><Down /></Slot>
    <PushButton $grey $gap={4}>
      <Svg w={10} h={10}><path d="M8 0V10L1.5 5Z" fill="#222" /></Svg>
    </PushButton>
    <PushButton $grey $gap={7}>
      <Svg w={10} h={10}><path d="M2 0V10L8.5 5Z" fill="#222" /></Svg>
    </PushButton>
    <Grip $gap={7.5} />
    <Label $w={33} $gap={7}>Go to:</Label>
    <Select>
      G1
      <SelectArrow><Down /></SelectArrow>
    </Select>
  </ToolBar>
);

const Horizontal = ({ gap }) => (
  <HScroll>
    <Arrow dir="left" />
    <HThumb $gap={gap} />
    <Arrow dir="right" />
  </HScroll>
);
const Vertical = () => (
  <VScroll>
    <Arrow dir="up" />
    <VThumb />
    <Arrow dir="down" />
  </VScroll>
);

export default function App() {
  return (
    <Page>
      <Global />
      <SessionBar>
        <XLogo />
        <SessionName>X2GO-Demo18-52-1699946277_stDKDE_dp32@sopcfpgaic58.el.yuntech.edu.tw</SessionName>
        <SessionButtons>
          <Svg w={11} h={11}><path d="M0 5.5H11" stroke="#fff" /></Svg>
          <Svg w={11} h={11}><path d="M.5 2.5H8.5V10.5H.5ZM2.5 2.5V.5H10.5V8.5H8.5" stroke="#fff" /></Svg>
          <Svg w={11} h={11}><path d="M.5 .5L10.5 10.5M10.5 .5L.5 10.5" stroke="#fff" strokeWidth="1.1" /></Svg>
        </SessionButtons>
      </SessionBar>
      <Taskbar />
      <WindowTitle>
        <TitleText>*&lt;nWave:1&gt; /home/Demo18/HW1_QPSK/script/AllData.vcd.fsdb</TitleText>
        <TitleButtons>
          <RoundButton $gap={0}><Svg w={8} h={8}><path d="M1.5 2.5L4 5.5L6.5 2.5" stroke="#222" strokeWidth="1.3" /></Svg></RoundButton>
          <RoundButton $gap={9}><Svg w={8} h={8}><path d="M4 1.5L6.5 4L4 6.5L1.5 4Z" stroke="#222" strokeWidth="1.2" /></Svg></RoundButton>
          <RoundButton $gap={22}><Svg w={8} h={8}><path d="M1.5 1.5L6.5 6.5M6.5 1.5L1.5 6.5" stroke="#222" strokeWidth="1.2" /></Svg></RoundButton>
        </TitleButtons>
      </WindowTitle>
      <MenuBar>
        {menus.map(([a, u, b, w]) => (
          <MenuItem key={u + b} $w={w}>{a}<u>{u}</u>{b}</MenuItem>
        ))}
        <Search>
          <Svg w={18} h={18}>
            <circle cx="10.5" cy="6" r="4.6" stroke="#111" strokeWidth="1.8" fill="#dbe6f2" />
            <path d="M7.5 9.5L2 16" stroke="#111" strokeWidth="3" />
            <path d="M12 14h5l-2.5 3Z" fill="#111" />
          </Svg>
          <SearchField>String/Signal</SearchField>
        </Search>
      </MenuBar>
      <Tools />
      <Workspace>
        <Column $w={177} $pad={1}>
          <Panel>
            <GroupRow $h={22}>
              <GroupMark $on />
              <GroupName>G1</GroupName>
              <RowTick />
            </GroupRow>
            {signals.map(([name, kind]) => (
              <SignalRow key={name}>
                <RowDot />
                <VerIcon />
                {kind === "net" ? <NetIcon /> : <RegIcon />}
                <Name>{name}</Name>
                <RowTick />
              </SignalRow>
            ))}
            <GroupRow $h={19}>
              <GroupMark $on />
              <GroupName>G2</GroupName>
              <RowTick />
            </GroupRow>
            <SelectedSignal>
              <VerIcon inv />
              <NetIcon inv />
              <Name>sum[15:0]</Name>
            </SelectedSignal>
            <InsertBar />
            <GroupRow $h={17}>
              <GroupMark />
              <GroupName>G3</GroupName>
              <RowTick />
            </GroupRow>
          </Panel>
          <Horizontal gap={12} />
        </Column>
        <Gutter $w={19} $pad={3}>
          <Vertical />
          <SplitGrip $gap={0} />
        </Gutter>
        <Column $w={111}>
          <Panel>
            <ValueRow $h={22} />
            {signals.map(([name, , value]) => (
              <ValueRow key={name}><Name>{value}</Name></ValueRow>
            ))}
            <ValueRow $h={200} $gap={20}><Name>416</Name></ValueRow>
          </Panel>
          <Horizontal />
        </Column>
        <Gutter $w={5}><SplitGrip $gap={1} /></Gutter>
        <Column $w={2233}>
          <Waves />
          <Horizontal />
        </Column>
        <Gutter $w={15} $pad={3}>
          <ScrollStack>
            <Vertical />
            <RedCorner />
          </ScrollStack>
        </Gutter>
      </Workspace>
      <StatusBar />
      <Taskbar bottom />
    </Page>
  );
}
